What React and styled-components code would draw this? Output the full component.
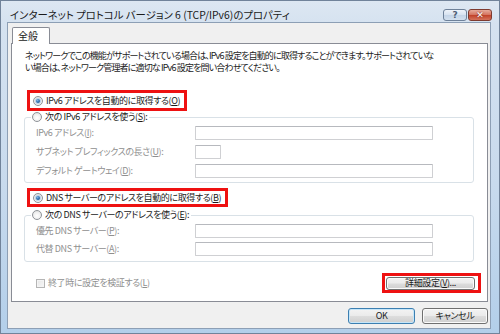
import React from 'react';
import styled, { createGlobalStyle, css } from 'styled-components';

const GlobalStyle = createGlobalStyle`
  html, body { margin: 0; padding: 0; background: #ffffff; }
  body {
    font-family: "Noto Sans CJK JP", "Noto Sans", sans-serif;
    font-size: 9px;
    letter-spacing: -0.4px;
    font-feature-settings: "palt";
    color: #1b1b1b;
  }
`;

const Window = styled.div`
  width: 500px;
  height: 334px;
  box-sizing: border-box;
  display: flex;
  flex-direction: column;
  border: 1px solid #71839a;
  background: linear-gradient(to bottom, #dde7f2 0px, #d5e2f0 24px, #c8daed 55%, #b3cfea 100%);
`;

const TitleBar = styled.div`
  height: 21px;
  box-sizing: border-box;
  display: flex;
  align-items: flex-start;
  padding: 7px 7px 0 9px;
`;

const Title = styled.div`
  flex: 1;
  font-size: 10.4px;
  letter-spacing: 0;
  line-height: 14px;
  color: #1a1a1a;
  white-space: nowrap;
`;

const CaptionButtons = styled.div`
  display: flex;
  gap: 1px;
  margin-top: 1px;
`;

const CaptionButton = styled.div`
  width: 24px;
  height: 12px;
  box-sizing: border-box;
  border-radius: 3px;
  display: flex;
  align-items: center;
  justify-content: center;
  font-family: "DejaVu Sans", sans-serif;
  font-weight: bold;
  font-size: 9px;
  letter-spacing: 0;
  line-height: 1;
  ${({ $close }) =>
    $close
      ? css`
          border: 1px solid #7e3a2f;
          background: linear-gradient(to bottom, #e7ab9c 0%, #d57763 45%, #c2442c 55%, #d4735c 100%);
          color: #ffffff;
          text-shadow: 0 0 2px #6b1d10;
        `
      : css`
          border: 1px solid #6e8199;
          background: linear-gradient(to bottom, #eef3fa 0%, #d9e4f1 45%, #c5d5e8 55%, #d3e0ef 100%);
          color: #4e5f75;
        `}
`;

const Client = styled.div`
  flex: 1;
  margin: 0 8px 4px 6px;
  border: 1px solid #8d9fb5;
  background: #f0f0f0;
  display: flex;
  flex-direction: column;
  padding: 4px 2px 4px 3px;
`;

const TabStrip = styled.div`
  display: flex;
  padding-left: 1px;
  height: 16px;
  position: relative;
  z-index: 1;
`;

const Tab = styled.div`
  width: 38px;
  height: 17px;
  box-sizing: border-box;
  border: 1px solid #898c95;
  border-bottom: none;
  border-radius: 2px 2px 0 0;
  background: #ffffff;
  padding-left: 5px;
  line-height: 15px;
  font-size: 10px;
  letter-spacing: 0;
`;

const Panel = styled.div`
  height: 259px;
  box-sizing: border-box;
  border: 1px solid #898c95;
  background: #ffffff;
  display: flex;
  flex-direction: column;
`;

const Description = styled.p`
  margin: 0;
  padding: 6px 13px 0 13px;
  line-height: 12px;
  letter-spacing: -0.85px;
  white-space: nowrap;
`;

const Highlight = styled.div`
  align-self: ${({ $end }) => ($end ? 'flex-end' : 'flex-start')};
  border: 3px solid #ee1111;
  display: flex;
  align-items: center;
  box-sizing: border-box;
  height: ${({ $h }) => $h}px;
  padding: ${({ $pad }) => $pad};
`;

const Choice = styled.label`
  display: flex;
  align-items: center;
  gap: 3px;
  white-space: nowrap;
  line-height: 12px;
  color: ${({ $disabled }) => ($disabled ? '#8f8f8f' : '#1b1b1b')};
`;

const RadioDot = styled.span`
  width: 10px;
  height: 10px;
  box-sizing: border-box;
  border-radius: 50%;
  border: 1px solid #8f9398;
  background: radial-gradient(circle at 50% 60%, #ffffff 0%, #f1f1f1 50%, #d6d6d6 100%);
  display: inline-flex;
  align-items: center;
  justify-content: center;
  flex: none;
  &::after {
    content: '';
    width: 4px;
    height: 4px;
    border-radius: 50%;
    display: ${({ $checked }) => ($checked ? 'block' : 'none')};
    background: radial-gradient(circle at 40% 35%, #7fb5e6 0%, #2d6fb0 50%, #13427a 100%);
    box-shadow: 0 0 0 1px #b9d3ea;
  }
`;

const CheckBox = styled.span`
  width: 9px;
  height: 9px;
  box-sizing: border-box;
  border: 1px solid #b5b5b5;
  background: linear-gradient(135deg, #e6e6e6 0%, #f7f7f7 100%);
  box-shadow: inset 0 0 0 1px #f4f4f4;
  flex: none;
`;

const Group = styled.fieldset`
  margin: ${({ $mt }) => $mt}px 0 0 12px;
  width: 450px;
  box-sizing: border-box;
  border: 1px solid #d9e1e7;
  border-radius: 3px;
  padding: ${({ $pt }) => $pt}px 0 ${({ $pb }) => $pb}px 11px;
  display: flex;
  flex-direction: column;
  gap: ${({ $gap }) => $gap}px;
`;

const Legend = styled.legend`
  padding: 0 2px 0 1px;
  margin-left: -5px;
  height: 12px;
  background: #ffffff;
`;

const FieldRow = styled.div`
  display: grid;
  grid-template-columns: 159px auto;
  align-items: center;
  height: 14px;
`;

const FieldLabel = styled.span`
  color: #8f8f8f;
  white-space: nowrap;
  line-height: 12px;
`;

const TextBox = styled.div`
  width: ${({ $w }) => $w}px;
  height: 14px;
  box-sizing: border-box;
  border: 1px solid #cfd0d3;
  border-top-color: #b7b9be;
  background: #ffffff;
  border-radius: 1px;
`;

const BottomRow = styled.div`
  display: flex;
  align-items: center;
  justify-content: space-between;
  margin-top: 11px;
  padding: 0 6px 0 24px;
`;

const Button = styled.div`
  width: ${({ $w }) => $w}px;
  height: ${({ $h }) => $h || 16}px;
  box-sizing: border-box;
  border-radius: 3px;
  display: flex;
  align-items: center;
  justify-content: center;
  line-height: 12px;
  white-space: nowrap;
  color: #1b1b1b;
  border: 1px solid ${({ $default }) => ($default ? '#3c7fb1' : '#707070')};
  background: linear-gradient(to bottom, #f3f3f3 0%, #ebebeb 48%, #dddddd 52%, #cfcfcf 100%);
  box-shadow: inset 0 0 0 1px ${({ $default }) => ($default ? '#c6e6f9' : '#fbfbfb')};
`;

const Footer = styled.div`
  display: flex;
  justify-content: flex-end;
  gap: 7px;
  margin-top: 6px;
`;

const Ak = ({ k }) => (
  <>
    (<u>{k}</u>)
  </>
);

export default function App() {
  return (
    <>
      <GlobalStyle />
      <Window>
        <TitleBar>
          <Title>インターネット プロトコル バージョン 6 (TCP/IPv6)のプロパティ</Title>
          <CaptionButtons>
            <CaptionButton>?</CaptionButton>
            <CaptionButton $close>✕</CaptionButton>
          </CaptionButtons>
        </TitleBar>
        <Client>
          <TabStrip>
            <Tab>全般</Tab>
          </TabStrip>
          <Panel>
            <Description>
              ネットワークでこの機能がサポートされている場合は、IPv6 設定を自動的に取得することができます。サポートされていな
              <br />
              い場合は、ネットワーク管理者に適切な IPv6 設定を問い合わせてください。
            </Description>
            <Highlight $h={21} $pad="0 4px 0 3px" style={{ marginTop: 16, marginLeft: 15 }}>
              <Choice>
                <RadioDot $checked />
                <span>
                  IPv6 アドレスを自動的に取得する<Ak k="O" />
                </span>
              </Choice>
            </Highlight>
            <Group $mt={0} $pt={3} $pb={4} $gap={5}>
              <Legend>
                <Choice>
                  <RadioDot />
                  <span>
                    次の IPv6 アドレスを使う<Ak k="S" />:
                  </span>
                </Choice>
              </Legend>
              <FieldRow>
                <FieldLabel>
                  IPv6 アドレス<Ak k="I" />:
                </FieldLabel>
                <TextBox $w={238} />
              </FieldRow>
              <FieldRow>
                <FieldLabel>
                  サブネット プレフィックスの長さ<Ak k="U" />:
                </FieldLabel>
                <TextBox $w={26} />
              </FieldRow>
              <FieldRow>
                <FieldLabel>
                  デフォルト ゲートウェイ<Ak k="D" />:
                </FieldLabel>
                <TextBox $w={238} />
              </FieldRow>
            </Group>
            <Highlight $h={19} $pad="0 4px 0 3px" style={{ marginTop: 5, marginLeft: 15 }}>
              <Choice>
                <RadioDot $checked />
                <span>
                  DNS サーバーのアドレスを自動的に取得する<Ak k="B" />
                </span>
              </Choice>
            </Highlight>
            <Group $mt={2} $pt={3} $pb={5} $gap={4}>
              <Legend>
                <Choice>
                  <RadioDot />
                  <span>
                    次の DNS サーバーのアドレスを使う<Ak k="E" />:
                  </span>
                </Choice>
              </Legend>
              <FieldRow>
                <FieldLabel>
                  優先 DNS サーバー<Ak k="P" />:
                </FieldLabel>
                <TextBox $w={238} />
              </FieldRow>
              <FieldRow>
                <FieldLabel>
                  代替 DNS サーバー<Ak k="A" />:
                </FieldLabel>
                <TextBox $w={238} />
              </FieldRow>
            </Group>
            <BottomRow>
              <Choice $disabled>
                <CheckBox />
                <span>
                  終了時に設定を検証する<Ak k="L" />
                </span>
              </Choice>
              <Highlight $h={20} $pad="0 3px 0 1px">
                <Button $w={89} $h={13}>
                  詳細設定<Ak k="V" />...
                </Button>
              </Highlight>
            </BottomRow>
          </Panel>
          <Footer>
            <Button $w={67} $default>
              OK
            </Button>
            <Button $w={66}>キャンセル</Button>
          </Footer>
        </Client>
      </Window>
    </>
  );
}
